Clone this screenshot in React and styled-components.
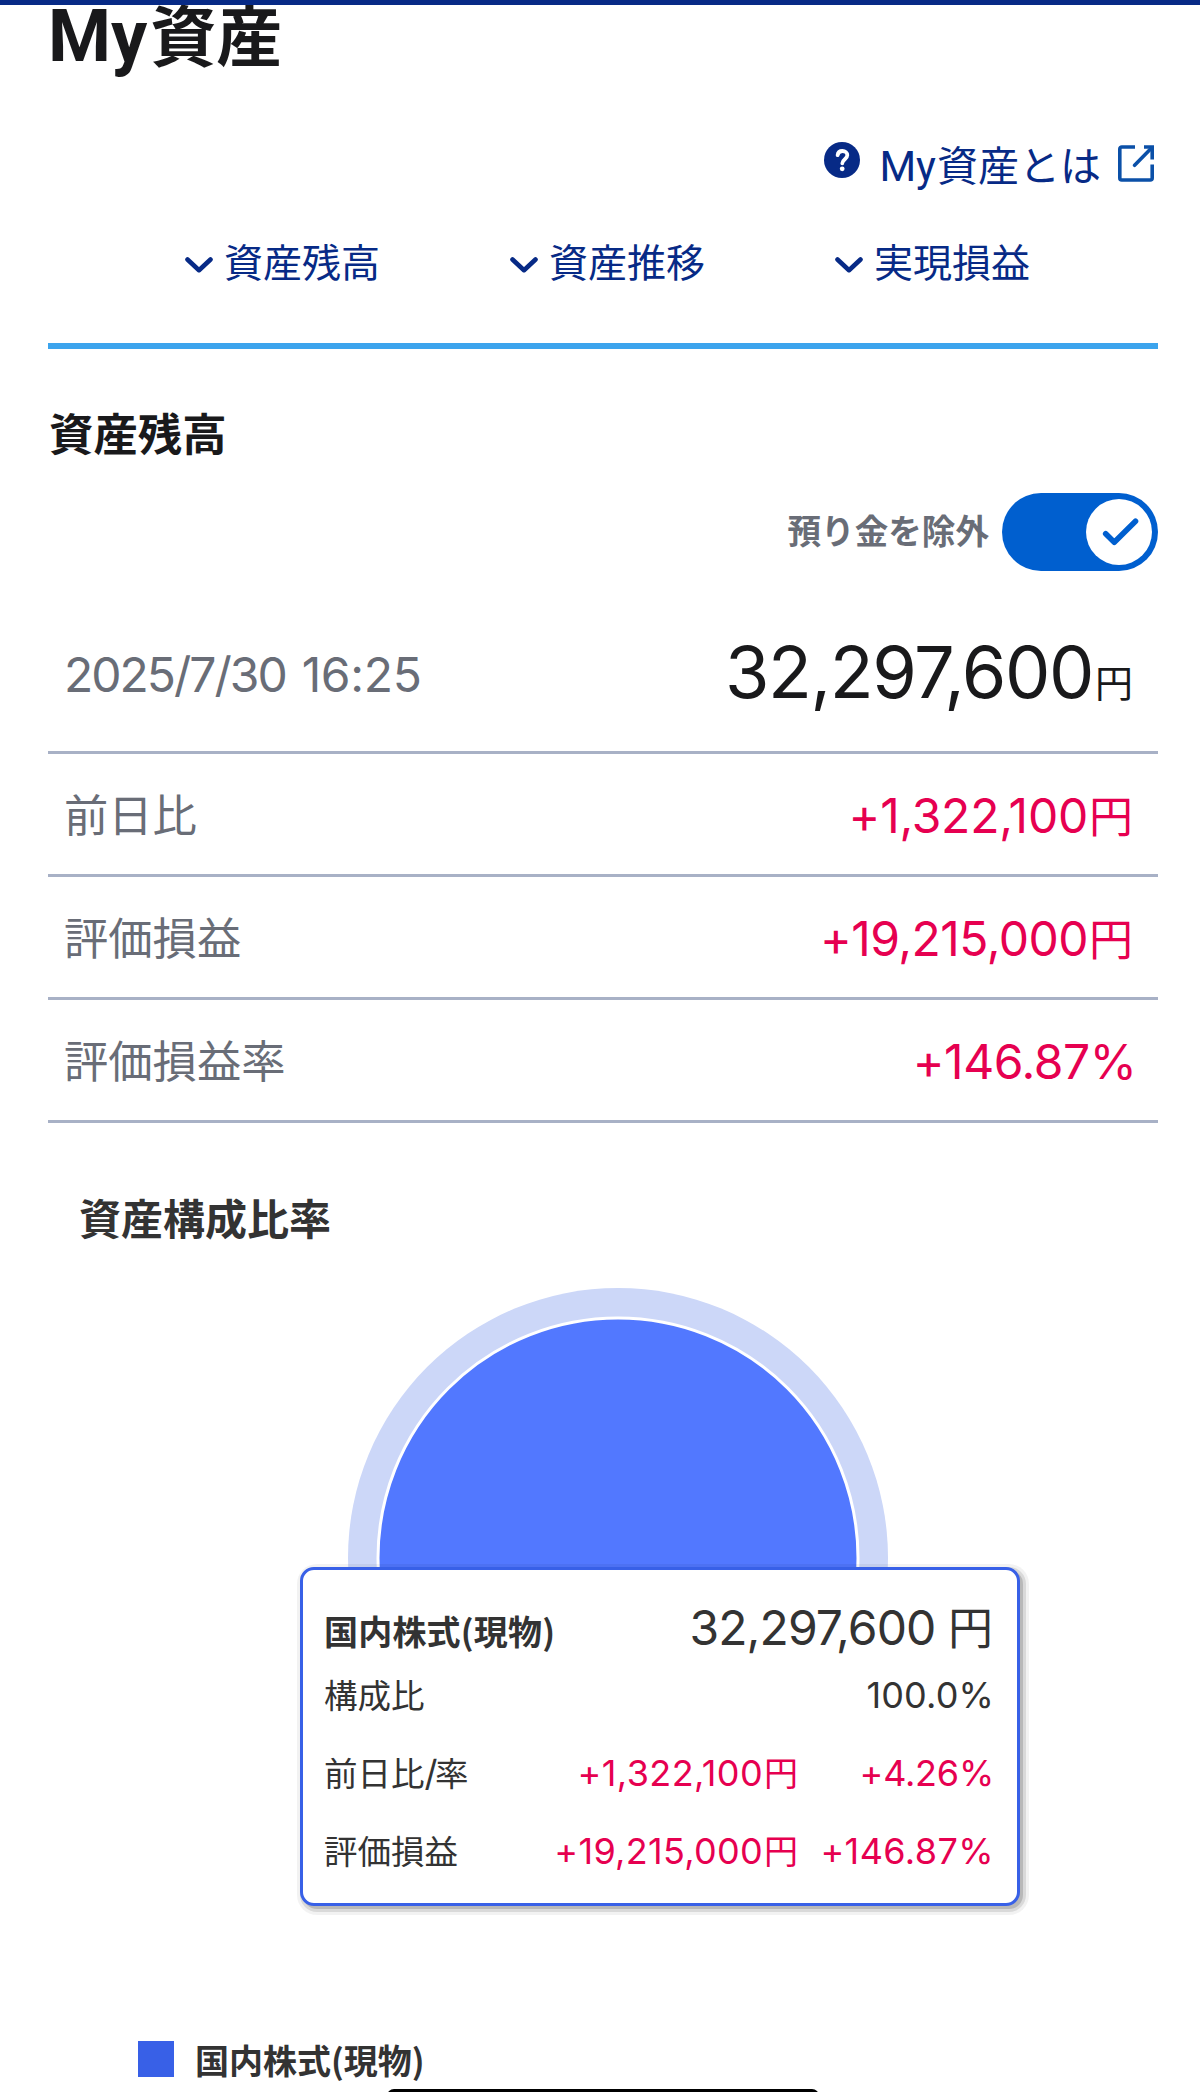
import React from 'react';
import styled, { createGlobalStyle } from 'styled-components';

const color = {
  navy: '#072a86',
  sky: '#3ca4ed',
  blue: '#005fcf',
  link: '#0b50a8',
  text: '#19191b',
  body: '#333333',
  muted: '#696d77',
  line: '#a8b1c6',
  plus: '#e60050',
  pie: '#5278ff',
  pieHalo: '#ccd7f8',
  pieBorder: '#3860e7',
};

const font = {
  jp: '"Noto Sans CJK JP", sans-serif',
  number: 'Inter, "Noto Sans CJK JP", sans-serif',
  latin: 'Roboto, "Noto Sans CJK JP", sans-serif',
};

const GlobalStyle = createGlobalStyle`
  * {
    box-sizing: border-box;
  }
  body {
    background: #fff;
    color: ${color.text};
    font-family: ${font.jp};
    margin: 0;
  }
`;

const Page = styled.main`
  height: 2092px;
  overflow: hidden;
  padding: 0 42px 0 48px;
  position: relative;
  width: 1200px;
`;

const TopBar = styled.div`
  background: ${color.navy};
  height: 5px;
  left: 0;
  position: absolute;
  right: 0;
  top: 0;
  z-index: 2;
`;

const HomeIndicator = styled.div`
  background: #000;
  border-radius: 7px;
  bottom: -12px;
  height: 15px;
  left: 387px;
  position: absolute;
  width: 432px;
`;

const Title = styled.h1`
  font-size: 66px;
  font-weight: 700;
  line-height: 64px;
  margin: 0;
`;

const Latin = styled.span`
  font-family: ${font.latin};
  font-size: ${({ $size }) => $size}px;
  line-height: 0;
  margin-right: ${({ $gap }) => $gap || 0}px;
`;

const HelpRow = styled.div`
  align-items: center;
  color: ${color.navy};
  display: flex;
  font-size: 41px;
  height: 60px;
  justify-content: flex-end;
  line-height: 60px;
  margin-top: 69px;
  padding-right: 4px;
`;

const HelpIcon = styled.svg`
  height: 36px;
  margin: 0 19px 6px 0;
  width: 36px;
`;

const ExternalIcon = styled.svg`
  color: ${color.link};
  height: 37px;
  margin-left: 17px;
  width: 36px;
`;

const Nav = styled.nav`
  border-bottom: 6px solid ${color.sky};
  display: grid;
  grid-template-columns: repeat(3, 325px);
  height: 119px;
  margin-top: 37px;
  padding-left: 137px;
  width: 1110px;
`;

const NavLink = styled.a`
  align-items: center;
  color: ${color.navy};
  display: flex;
  font-size: 39px;
  gap: 11px;
  height: 60px;
  line-height: 60px;
  svg {
    height: 16px;
    margin-top: 9px;
    width: 28px;
  }
`;

const SectionTitle = styled.h2`
  font-size: 44.4px;
  font-weight: 700;
  line-height: 60px;
  margin: 53px 0 0;
  padding-left: 1px;
`;

const ToggleRow = styled.div`
  align-items: center;
  display: flex;
  gap: 13px;
  height: 78px;
  justify-content: flex-end;
  margin-top: 31px;
`;

const ToggleLabel = styled.span`
  color: ${color.muted};
  font-size: 33.6px;
  font-weight: 700;
  line-height: 48px;
  padding-bottom: 4px;
`;

const Toggle = styled.button`
  background: ${color.blue};
  border: 0;
  border-radius: 39px;
  display: flex;
  height: 78px;
  justify-content: flex-end;
  padding: 6px;
  width: 156px;
`;

const Knob = styled.span`
  background: #fff;
  border-radius: 50%;
  height: 66px;
  width: 66px;
  svg {
    display: block;
    height: 66px;
    width: 66px;
  }
`;

const SummaryRow = styled.div`
  align-items: center;
  border-bottom: 3px solid ${color.line};
  display: flex;
  font-size: 44.3px;
  height: 123px;
  justify-content: space-between;
  line-height: 60px;
  padding: 0 25px 2px 16px;
`;

const TotalRow = styled(SummaryRow)`
  height: 163px;
  margin-top: 20px;
  padding-bottom: 0;
`;

const Timestamp = styled.span`
  color: ${color.muted};
  padding-top: 3px;
`;

const Total = styled.span`
  font-family: ${font.number};
  font-size: 72px;
  letter-spacing: -1.44px;
  padding-top: 1px;
`;

const Label = styled.span`
  color: ${color.muted};
`;

const Value = styled.span`
  color: ${color.plus};
  margin-right: ${({ $pull }) => -($pull || 0)}px;
  padding-top: 2px;
`;

const Num = styled.span`
  font-family: ${font.number};
  font-size: ${({ $size }) => $size}px;
  letter-spacing: ${({ $track }) => $track || 0}px;
  line-height: 0;
`;

const Time = styled(Num)`
  margin-left: 6px;
`;

const Yen = styled.span`
  font-family: ${font.jp};
  font-size: ${({ $size }) => $size}px;
  letter-spacing: 0;
  line-height: 0;
  margin-left: ${({ $gap }) => $gap || 0}px;
  vertical-align: ${({ $raise }) => $raise || 0}px;
`;

const ChartTitle = styled.h3`
  color: ${color.body};
  font-size: 42px;
  font-weight: 700;
  line-height: 60px;
  margin: 64px 0 0;
  padding-left: 31px;
`;

const Chart = styled.div`
  height: 540px;
  margin: 41px 0 0 300px;
  position: relative;
  width: 540px;
`;

const Pie = styled.svg`
  display: block;
  height: 540px;
  width: 540px;
`;

const Tooltip = styled.div`
  background: #fff;
  border: 3px solid ${color.pieBorder};
  border-radius: 14px;
  box-shadow:
    3px 3px 0 0 rgba(0, 0, 0, 0.15),
    3px 3px 0 3px rgba(0, 0, 0, 0.1),
    3px 3px 0 6px rgba(0, 0, 0, 0.05);
  color: ${color.body};
  font-size: 33.5px;
  height: 339px;
  left: -48px;
  padding: 37px 24px 0 21px;
  position: absolute;
  top: 279px;
  width: 720px;
`;

const TooltipHead = styled.div`
  display: flex;
  height: 48px;
  justify-content: space-between;
  line-height: 48px;
  strong {
    font-size: 34px;
    letter-spacing: 0.2px;
  }
`;

const TooltipRow = styled.div`
  display: grid;
  grid-template-columns: 150px 1fr 195px;
  height: 78px;
  line-height: 78px;
  white-space: nowrap;
`;

const Cell = styled.span`
  color: ${({ $plus }) => ($plus ? color.plus : 'inherit')};
  margin-right: ${({ $pull }) => -($pull || 0)}px;
  text-align: right;
`;

const Legend = styled.div`
  align-items: center;
  color: ${color.body};
  display: flex;
  font-size: 34px;
  font-weight: 700;
  gap: 21px;
  height: 36px;
  line-height: 36px;
  margin: 213px 0 0 90px;
  span:last-child {
    padding-top: 2px;
  }
`;

const Swatch = styled.span`
  background: ${color.pieBorder};
  height: 36px;
  width: 36px;
`;

const links = ['資産残高', '資産推移', '実現損益'];

const summary = [
  { label: '前日比', value: '+1,322,100', track: -0.24, yen: true },
  { label: '評価損益', value: '+19,215,000', track: -0.53, yen: true },
  { label: '評価損益率', value: '+146.87%', track: -0.43 },
];

const details = [
  {
    label: (
      <>
        前日比<Num $size={36} $track={-2.5}>/</Num>率
      </>
    ),
    amount: '+1,322,100',
    amountTrack: 0.41,
    rate: '+4.26%',
    rateTrack: -0.24,
  },
  { label: '評価損益', amount: '+19,215,000', amountTrack: 0.3, rate: '+146.87%', rateTrack: 0.4 },
];

function Chevron() {
  return (
    <svg viewBox="0 0 28 16" fill="none" stroke="currentColor" strokeWidth="4.6" strokeLinecap="round" strokeLinejoin="round">
      <path d="M2.5 2.5 14 13.2 25.5 2.5" />
    </svg>
  );
}

function Help() {
  return (
    <HelpRow>
      <HelpIcon viewBox="0 0 36 36" fill="none">
        <circle cx="18" cy="18" r="18" fill={color.navy} />
        <path
          d="M13.6 13.2C13.9 10.6 15.7 9 18.4 9C21.2 9 23.3 10.8 23.3 13.3C23.3 17.1 18.3 17.3 18.3 21.3"
          stroke="#fff"
          strokeWidth="3.8"
          strokeLinecap="round"
        />
        <circle cx="18.2" cy="26.8" r="2.4" fill="#fff" />
      </HelpIcon>
      <span>
        <Latin $size={42} $gap={1}>My</Latin>
        資産とは
      </span>
      <ExternalIcon viewBox="0 0 36 37" fill="none" stroke="currentColor" strokeWidth="3.6">
        <path d="M17 2H3.8A2 2 0 0 0 1.8 4V33A2 2 0 0 0 3.8 35H32.2A2 2 0 0 0 34.2 33V19.5" />
        <path d="M26 2H34.2V14.5" />
        <path d="M16.6 20.3 33.5 3" strokeLinecap="round" />
      </ExternalIcon>
    </HelpRow>
  );
}

function AssetTooltip() {
  return (
    <Tooltip>
      <TooltipHead>
        <strong>国内株式(現物)</strong>
        <span>
          <Num $size={48} $track={-0.9}>32,297,600</Num> <Yen $size={45} $gap={5}>円</Yen>
        </span>
      </TooltipHead>
      <TooltipRow>
        <span>構成比</span>
        <span />
        <Cell $pull={1}>
          <Num $size={36} $track={0.14}>100.0%</Num>
        </Cell>
      </TooltipRow>
      {details.map((item) => (
        <TooltipRow key={item.amount}>
          <span>{item.label}</span>
          <Cell $plus>
            <Num $size={36} $track={item.amountTrack}>{item.amount}</Num>
            <Yen $size={34} $gap={1}>円</Yen>
          </Cell>
          <Cell $plus $pull={1}>
            <Num $size={36} $track={item.rateTrack}>{item.rate}</Num>
          </Cell>
        </TooltipRow>
      ))}
    </Tooltip>
  );
}

export default function App() {
  return (
    <Page>
      <GlobalStyle />
      <TopBar />
      <Title>
        <Latin $size={72} $gap={3}>My</Latin>
        資産
      </Title>
      <Help />
      <Nav>
        {links.map((link) => (
          <NavLink key={link}>
            <Chevron />
            {link}
          </NavLink>
        ))}
      </Nav>

      <SectionTitle>資産残高</SectionTitle>
      <ToggleRow>
        <ToggleLabel>預り金を除外</ToggleLabel>
        <Toggle type="button" role="switch" aria-checked="true">
          <Knob>
            <svg viewBox="0 0 66 66" fill="none" stroke={color.blue} strokeWidth="5.6" strokeLinecap="round" strokeLinejoin="round">
              <path d="M19.7 34.7 28.3 43.3 49.5 22.3" />
            </svg>
          </Knob>
        </Toggle>
      </ToggleRow>

      <TotalRow>
        <Timestamp>
          <Num $size={48} $track={-2}>2025/7/30</Num>{' '}
          <Time $size={48} $track={-0.3}>16:25</Time>
        </Timestamp>
        <Total>
          32,297,600<Yen $size={38} $gap={2} $raise={1}>円</Yen>
        </Total>
      </TotalRow>
      {summary.map(({ label, value, track, yen }) => (
        <SummaryRow key={label}>
          <Label>{label}</Label>
          <Value $pull={yen ? 0 : 3.5}>
            <Num $size={48} $track={track}>{value}</Num>
            {yen && <Yen $size={44} $gap={1}>円</Yen>}
          </Value>
        </SummaryRow>
      ))}

      <ChartTitle>資産構成比率</ChartTitle>
      <Chart>
        <Pie viewBox="0 0 540 540">
          <circle cx="270" cy="270" r="270" fill={color.pieHalo} />
          <circle cx="270" cy="270" r="240" fill={color.pie} stroke="#fff" strokeWidth="3" />
        </Pie>
        <AssetTooltip />
      </Chart>
      <Legend>
        <Swatch />
        <span>国内株式(現物)</span>
      </Legend>
      <HomeIndicator />
    </Page>
  );
}
